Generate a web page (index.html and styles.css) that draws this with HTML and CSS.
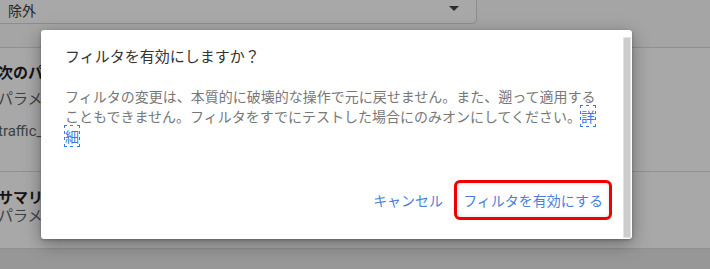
FILE: index.html
```html
<!DOCTYPE html>
<html lang="ja">
<head>
<meta charset="utf-8">
<title>フィルタを有効にしますか？</title>
<link rel="stylesheet" href="styles.css">
</head>
<body>
<div class="page">
  <div class="top-row">
    <div class="dropdown">
      <span class="dropdown-value">除外</span>
      <span class="dropdown-arrow"></span>
    </div>
  </div>
  <div class="section section-params">
    <div class="sec-title">次のパラメータを含む</div>
    <div class="sec-sub">パラメータ</div>
    <div class="sec-code">traffic_type</div>
  </div>
  <div class="section section-summary">
    <div class="sec-title">サマリー</div>
    <div class="sec-sub">パラメータ</div>
  </div>
  <div class="section section-bottom"></div>
</div>

<div class="overlay">
  <div class="dialog" role="dialog" aria-labelledby="dlg-title">
    <div class="dlg-main">
      <h2 class="dlg-title" id="dlg-title">フィルタを有効にしますか？</h2>
      <p class="dlg-body">フィルタの変更は、本質的に破壊的な操作で元に戻せません。また、遡って適用することもできません。フィルタをすでにテストした場合にのみオンにしてください。<a class="dlg-link" href="#">詳細</a></p>
      <div class="dlg-actions">
        <button class="btn btn-cancel" type="button">キャンセル</button>
        <button class="btn btn-confirm" type="button">フィルタを有効にする</button>
      </div>
    </div>
    <div class="dlg-scrollbar"></div>
  </div>
</div>
</body>
</html>
```

FILE: styles.css
```css
* { box-sizing: border-box; }

html, body {
  margin: 0;
  padding: 0;
  width: 710px;
  height: 269px;
  overflow: hidden;
}

body {
  font-family: "Noto Sans CJK JP", "Noto Sans", Roboto, sans-serif;
  background: #ffffff;
  color: #202124;
}

/* underlying page */
.page {
  width: 710px;
  height: 269px;
  display: flex;
  flex-direction: column;
}

.top-row {
  height: 48px;
  border-bottom: 1px solid #dcdcdc;
  background: #fbfbfb;
}

.dropdown {
  width: 477px;
  height: 24px;
  background: #ffffff;
  border-right: 1px solid #d6d6d6;
  border-bottom: 1px solid #d6d6d6;
  border-bottom-right-radius: 5px;
  display: flex;
  align-items: center;
  justify-content: space-between;
  padding: 0 17px 0 8px;
}

.dropdown-value {
  font-size: 14px;
  line-height: 18px;
  color: #3c3c3c;
  margin-top: -4px;
}

.dropdown-arrow {
  width: 0;
  height: 0;
  border-left: 5px solid transparent;
  border-right: 5px solid transparent;
  border-top: 5px solid #444;
  margin-top: -6px;
}

.section {
  margin-left: -2px;
  white-space: nowrap;
}

.section-params {
  height: 124px;
  border-bottom: 1px solid #dcdcdc;
  padding-top: 14px;
}

.section-summary {
  height: 77px;
  border-bottom: 1px solid #dcdcdc;
  padding-top: 15px;
}

.section-bottom {
  flex: 1;
  background: #e6e6e6;
}

.sec-title {
  font-size: 15px;
  font-weight: bold;
  line-height: 20px;
  color: #202124;
}

.sec-sub {
  font-size: 15px;
  line-height: 20px;
  color: #5f6368;
  margin-top: 6px;
}

.section-summary .sec-sub {
  margin-top: -2px;
}

.sec-code {
  font-family: Roboto, "Liberation Sans", sans-serif;
  font-size: 15px;
  line-height: 20px;
  color: #5f6368;
  margin-top: 13px;
}

/* overlay and dialog */
.overlay {
  position: absolute;
  left: 0;
  top: 0;
  width: 710px;
  height: 269px;
  background: rgba(0, 0, 0, 0.34);
  padding: 30px 0 0 41px;
}

.dialog {
  width: 591px;
  height: 209px;
  background: #ffffff;
  border-radius: 3px;
  box-shadow: 0 5px 18px rgba(0, 0, 0, 0.35), 0 1px 3px rgba(0, 0, 0, 0.25);
  display: flex;
}

.dlg-main {
  flex: 1;
  display: flex;
  flex-direction: column;
  padding: 16px 0 19px 24px;
}

.dlg-title {
  margin: 0;
  font-size: 15px;
  font-weight: normal;
  line-height: 20px;
  color: #333333;
}

.dlg-body {
  margin: 20px 18px 0 0;
  font-size: 14px;
  line-height: 20px;
  color: #777777;
}

.dlg-link {
  color: #3b78e7;
  text-decoration: none;
  outline: 1px dotted #3b78e7;
  outline-offset: 0;
}

.dlg-actions {
  margin-top: auto;
  display: flex;
  justify-content: flex-end;
  align-items: center;
  gap: 11px;
  padding-right: 11px;
}

.btn {
  font-family: inherit;
  font-size: 14px;
  line-height: 20px;
  color: #4a7fd8;
  background: transparent;
  border: none;
  padding: 0;
  margin: 0;
  cursor: pointer;
}

.btn-confirm {
  border: 3px solid #f00000;
  border-radius: 6px;
  padding: 7px 6px;
  box-shadow: inset 0 0 4px rgba(0, 0, 0, 0.12);
}

.dlg-scrollbar {
  width: 8px;
  margin: 7px 1px 1px 0;
  background: #cdcdcd;
  border: 1px solid #e4e4e4;
}
```
